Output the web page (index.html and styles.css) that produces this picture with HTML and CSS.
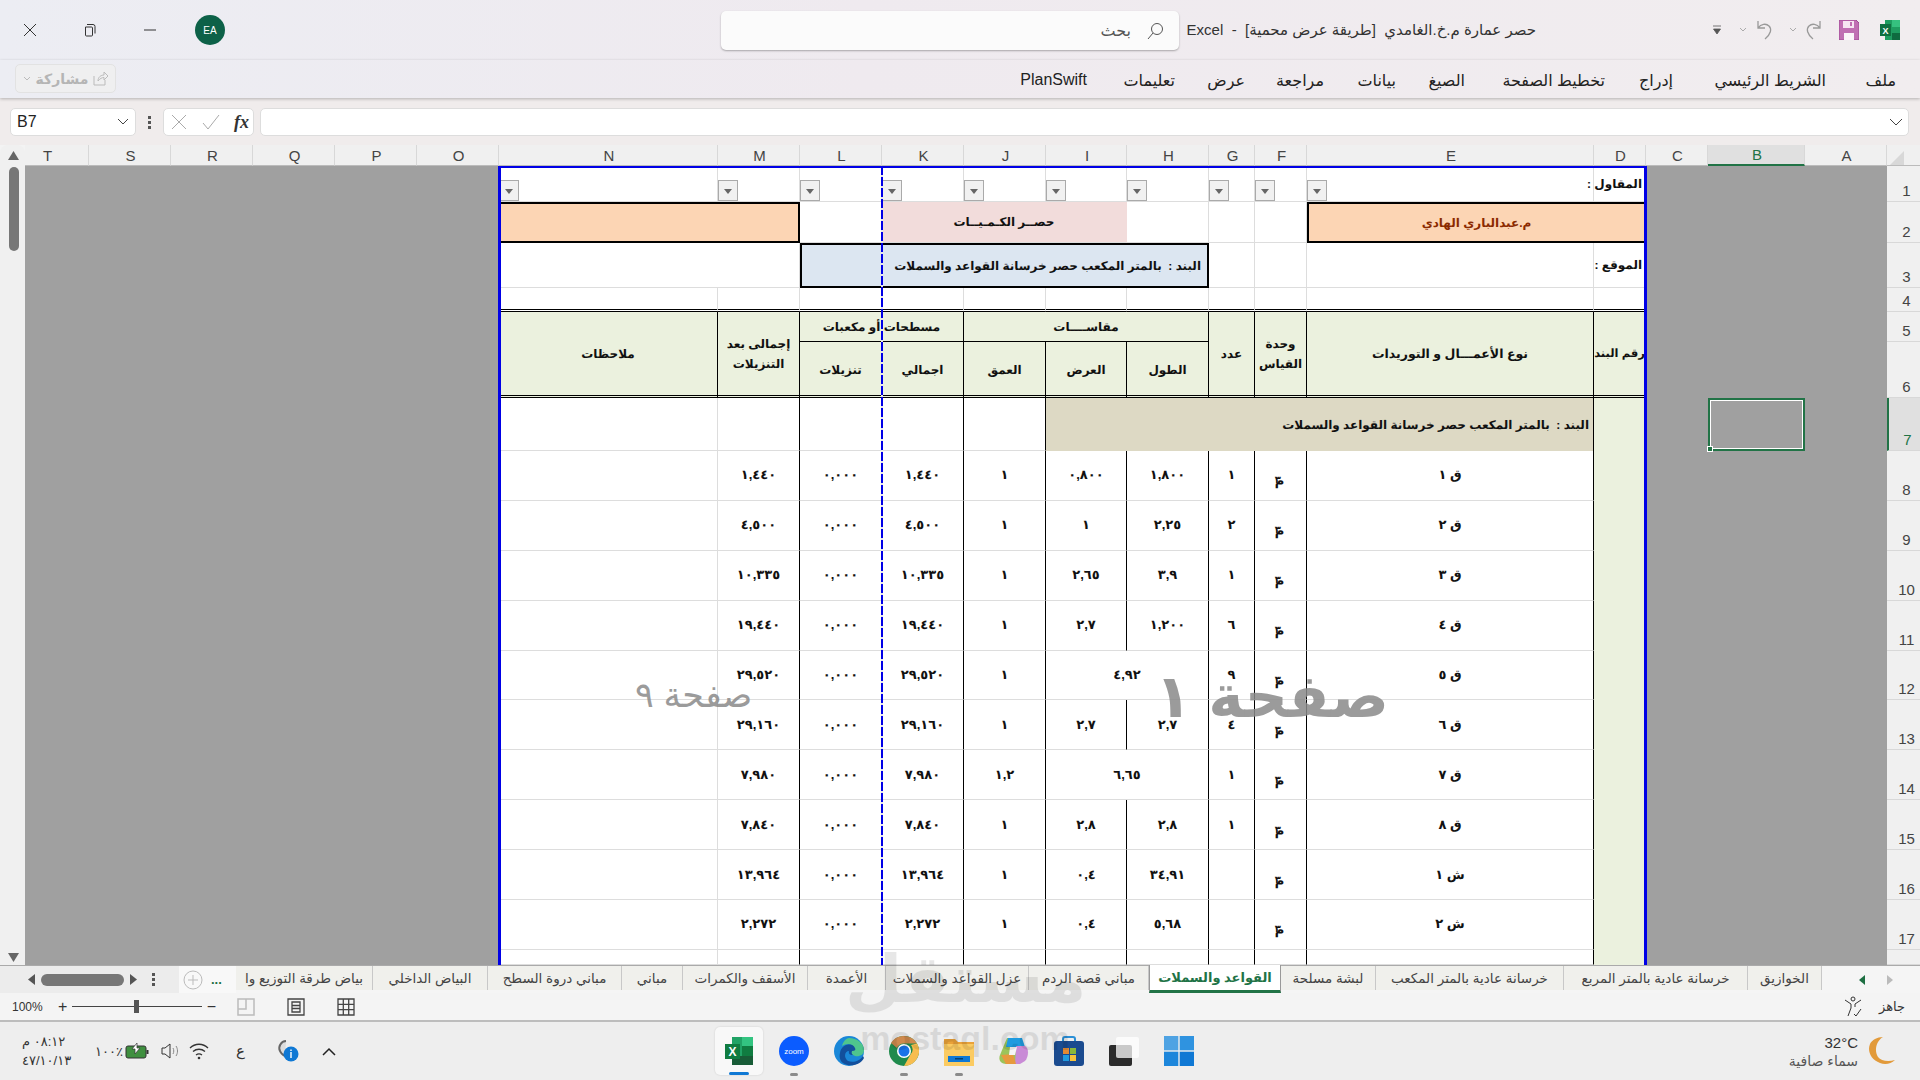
FILE: index.html
```html
<!DOCTYPE html>
<html lang="ar">
<head>
    <meta charset="UTF-8">
    <title>Excel</title>
    <link rel="stylesheet" href="styles.css">
</head>
<body>
<div class="app">
    <div class="titlebar">
        <div class="win-controls">
            <span class="win-btn"><svg width="14" height="14" viewBox="0 0 14 14"><path d="M1 1l12 12M13 1L1 13" stroke="#333" fill="none"/></svg></span>
            <span class="win-btn"><svg width="14" height="14" viewBox="0 0 14 14"><path d="M4 1.5h6a2 2 0 0 1 2 2v7M2.5 4h6a1 1 0 0 1 1 1v7a1 1 0 0 1-1 1h-5a1 1 0 0 1-1-1z" stroke="#333" fill="none"/></svg></span>
            <span class="win-btn"><svg width="14" height="14" viewBox="0 0 14 14"><path d="M1 7h12" stroke="#333" fill="none"/></svg></span>
            <span class="win-btn"><span class="avatar">EA</span></span>
        </div>
        <div class="search">
            <span>بحث</span>
            <svg width="20" height="20" viewBox="0 0 20 20"><circle cx="12" cy="8" r="5.5" stroke="#555" fill="none"/><path d="M8 12l-5 6" stroke="#555" fill="none"/></svg>
        </div>
        <div class="doc-title">حصر عمارة م.خ.الغامدي&nbsp; [طريقة عرض محمية]&nbsp; -&nbsp; Excel</div>
        <div class="qat">
            <svg class="q-more" width="10" height="12" viewBox="0 0 10 12"><path d="M1 2h8M1.500 5h7L5 10z" stroke="#555" fill="#555" stroke-width=".8"/></svg>
            <svg class="q-chev" width="8" height="6" viewBox="0 0 8 6"><path d="M1 1l3 3 3-3" stroke="#aaa" fill="none"/></svg>
            <svg class="q-undo" width="20" height="22" viewBox="0 0 20 22"><path d="M4 2v7h7M4 9c3-4 8-5 11-2 3 3 2 8-4 13" stroke="#999" fill="none" stroke-width="1.300"/></svg>
            <svg class="q-chev" width="8" height="6" viewBox="0 0 8 6"><path d="M1 1l3 3 3-3" stroke="#aaa" fill="none"/></svg>
            <svg class="q-redo" width="20" height="22" viewBox="0 0 20 22"><path d="M16 2v7H9M16 9c-3-4-8-5-11-2-3 3-2 8 4 13" stroke="#999" fill="none" stroke-width="1.300"/></svg>
            <svg class="q-save" width="20" height="20" viewBox="0 0 20 20"><path d="M0 0h17l3 3v17H0z" fill="#c06fb3" stroke="#a04a95"/><path d="M4 1h11v7H4z" fill="#f6e6f2"/><path d="M5 13h10v7H5z" fill="#fbf4f9"/><path d="M11 2h2v4h-2z" fill="#c06fb3"/></svg>
            <svg class="q-xl" width="20" height="20" viewBox="0 0 20 20"><path d="M5 0h15v20H5z" fill="#1f9d60"/><path d="M12 0h8v7h-8z" fill="#36c17f"/><path d="M12 13h8v7h-8z" fill="#0f6b3f"/><path d="M0 4h11v12H0z" fill="#107041"/><text x="5.500" y="14" class="xl-letter">X</text></svg>
        </div>
    </div>

    <div class="ribbon">
        <button class="share">
            <svg width="8" height="6" viewBox="0 0 8 6"><path d="M1 1l3 3 3-3" stroke="#bbb" fill="none"/></svg>
            <span>مشاركة</span>
            <svg width="15" height="15" viewBox="0 0 15 15"><path d="M1 5v9h11V9M5 10c0-4 3-6 6-6V1l4 4-4 4V6.500c-2 0-4 1-6 3.500z" stroke="#bbb" fill="none"/></svg>
        </button>
        <div class="ribbon-tabs">
            <span>PlanSwift</span>
            <span>تعليمات</span>
            <span>عرض</span>
            <span>مراجعة</span>
            <span>بيانات</span>
            <span>الصيغ</span>
            <span>تخطيط الصفحة</span>
            <span>إدراج</span>
            <span>الشريط الرئيسي</span>
            <span>ملف</span>
        </div>
    </div>

    <div class="formula-bar">
        <div class="namebox"><span>B7</span><svg width="12" height="8" viewBox="0 0 12 8"><path d="M1 1l5 5 5-5" stroke="#444" fill="none"/></svg></div>
        <div class="fb-dots"><i></i><i></i><i></i></div>
        <div class="fx-box">
            <svg width="18" height="18" viewBox="0 0 18 18"><path d="M2 2l14 14M16 2L2 16" stroke="#aaa" fill="none"/></svg>
            <svg width="20" height="18" viewBox="0 0 20 18"><path d="M2 10l5 6L18 2" stroke="#aaa" fill="none"/></svg>
            <span class="fx">fx</span>
        </div>
        <div class="formula-input"><svg width="14" height="8" viewBox="0 0 14 8"><path d="M1 1l6 6 6-6" stroke="#444" fill="none"/></svg></div>
    </div>

    <div class="workspace">
        <div class="vscroll">
            <svg width="11" height="9" viewBox="0 0 11 9"><path d="M5.500 0L11 9H0z" fill="#666"/></svg>
            <div class="vthumb"></div>
            <svg class="vdown" width="11" height="9" viewBox="0 0 11 9"><path d="M5.500 9L11 0H0z" fill="#666"/></svg>
        </div>
        <div class="sheet-col">
            <div class="col-head">
                <span class="first">T</span><span>S</span><span>R</span><span>Q</span><span>P</span><span>O</span><span>N</span><span>M</span><span>L</span><span>K</span><span>J</span><span>I</span><span>H</span><span>G</span><span>F</span><span>E</span><span>D</span><span>C</span><span class="on">B</span><span>A</span>
            </div>
            <div class="sheet-view">
                <div class="gray-left"></div>
                <div class="sheet">
                    <!-- row 1 -->
                    <div class="c"><i class="filter"></i></div>
                    <div class="c"><i class="filter"></i></div>
                    <div class="c"><i class="filter"></i></div>
                    <div class="c"><i class="filter"></i></div>
                    <div class="c"><i class="filter"></i></div>
                    <div class="c"><i class="filter"></i></div>
                    <div class="c"><i class="filter"></i></div>
                    <div class="c"><i class="filter"></i></div>
                    <div class="c"><i class="filter"></i></div>
                    <div class="c"><i class="filter"></i></div>
                    <div class="c label">المقاول :</div>
                    <!-- row 2 -->
                    <div class="c s2 peach"></div>
                    <div class="c"></div>
                    <div class="c s3 pink">حصــر الكـمـيــات</div>
                    <div class="c"></div>
                    <div class="c"></div>
                    <div class="c"></div>
                    <div class="c s2 peach name">م.عبدالباري الهادي</div>
                    <!-- row 3 -->
                    <div class="c s2"></div>
                    <div class="c s5 blue">البند :&nbsp; بالمتر المكعب حصر خرسانة القواعد والسملات</div>
                    <div class="c"></div>
                    <div class="c"></div>
                    <div class="c"></div>
                    <div class="c label">الموقع :</div>
                    <!-- row 4 -->
                    <div class="c r4"></div><div class="c r4"></div><div class="c r4"></div><div class="c r4"></div><div class="c r4"></div><div class="c r4"></div><div class="c r4"></div><div class="c r4"></div><div class="c r4"></div><div class="c r4"></div><div class="c r4"></div>
                    <!-- rows 5-6 -->
                    <div class="h rs2">ملاحظات</div>
                    <div class="h rs2">إجمالى بعد<br>التنزيلات</div>
                    <div class="h s2 sub">مسطحات أو مكعبات</div>
                    <div class="h s3 sub">مقاســــات</div>
                    <div class="h rs2">عدد</div>
                    <div class="h rs2">وحدة<br>القياس</div>
                    <div class="h rs2 wide">نوع الأعمـــال و التوريدات</div>
                    <div class="h rs2 tight">رقم البند</div>
                    <div class="h lo">تنزيلات</div>
                    <div class="h lo">اجمالي</div>
                    <div class="h lo">العمق</div>
                    <div class="h lo">العرض</div>
                    <div class="h lo">الطول</div>
                    <!-- row 7 -->
                    <div class="c"></div>
                    <div class="c bk"></div>
                    <div class="c bk"></div>
                    <div class="c bk"></div>
                    <div class="c bk"></div>
                    <div class="c s5 tan">البند :&nbsp; بالمتر المكعب حصر خرسانة القواعد والسملات</div>
                    <div class="dcol"></div>
                    <!-- rows 8-18 -->
                    <div class="c"></div><div class="c bk n">١,٤٤٠</div><div class="c bk n">٠,٠٠٠</div><div class="c bk n">١,٤٤٠</div><div class="c bk n">١</div><div class="c bk n">٠,٨٠٠</div><div class="c bk n">١,٨٠٠</div><div class="c bk n">١</div><div class="c bk n m3">م<sup>٣</sup></div><div class="c bk n">ق ١</div>
                    <div class="c"></div><div class="c bk n">٤,٥٠٠</div><div class="c bk n">٠,٠٠٠</div><div class="c bk n">٤,٥٠٠</div><div class="c bk n">١</div><div class="c bk n">١</div><div class="c bk n">٢,٢٥</div><div class="c bk n">٢</div><div class="c bk n m3">م<sup>٣</sup></div><div class="c bk n">ق ٢</div>
                    <div class="c"></div><div class="c bk n">١٠,٣٣٥</div><div class="c bk n">٠,٠٠٠</div><div class="c bk n">١٠,٣٣٥</div><div class="c bk n">١</div><div class="c bk n">٢,٦٥</div><div class="c bk n">٣,٩</div><div class="c bk n">١</div><div class="c bk n m3">م<sup>٣</sup></div><div class="c bk n">ق ٣</div>
                    <div class="c"></div><div class="c bk n">١٩,٤٤٠</div><div class="c bk n">٠,٠٠٠</div><div class="c bk n">١٩,٤٤٠</div><div class="c bk n">١</div><div class="c bk n">٢,٧</div><div class="c bk n">١,٢٠٠</div><div class="c bk n">٦</div><div class="c bk n m3">م<sup>٣</sup></div><div class="c bk n">ق ٤</div>
                    <div class="c"></div><div class="c bk n">٢٩,٥٢٠</div><div class="c bk n">٠,٠٠٠</div><div class="c bk n">٢٩,٥٢٠</div><div class="c bk n">١</div><div class="c bk n s2">٤,٩٢</div><div class="c bk n">٩</div><div class="c bk n m3">م<sup>٣</sup></div><div class="c bk n">ق ٥</div>
                    <div class="c"></div><div class="c bk n">٢٩,١٦٠</div><div class="c bk n">٠,٠٠٠</div><div class="c bk n">٢٩,١٦٠</div><div class="c bk n">١</div><div class="c bk n">٢,٧</div><div class="c bk n">٢,٧</div><div class="c bk n">٤</div><div class="c bk n m3">م<sup>٣</sup></div><div class="c bk n">ق ٦</div>
                    <div class="c"></div><div class="c bk n">٧,٩٨٠</div><div class="c bk n">٠,٠٠٠</div><div class="c bk n">٧,٩٨٠</div><div class="c bk n">١,٢</div><div class="c bk n s2">٦,٦٥</div><div class="c bk n">١</div><div class="c bk n m3">م<sup>٣</sup></div><div class="c bk n">ق ٧</div>
                    <div class="c"></div><div class="c bk n">٧,٨٤٠</div><div class="c bk n">٠,٠٠٠</div><div class="c bk n">٧,٨٤٠</div><div class="c bk n">١</div><div class="c bk n">٢,٨</div><div class="c bk n">٢,٨</div><div class="c bk n">١</div><div class="c bk n m3">م<sup>٣</sup></div><div class="c bk n">ق ٨</div>
                    <div class="c"></div><div class="c bk n">١٣,٩٦٤</div><div class="c bk n">٠,٠٠٠</div><div class="c bk n">١٣,٩٦٤</div><div class="c bk n">١</div><div class="c bk n">٠,٤</div><div class="c bk n">٣٤,٩١</div><div class="c bk n"></div><div class="c bk n m3">م<sup>٣</sup></div><div class="c bk n">ش ١</div>
                    <div class="c"></div><div class="c bk n">٢,٢٧٢</div><div class="c bk n">٠,٠٠٠</div><div class="c bk n">٢,٢٧٢</div><div class="c bk n">١</div><div class="c bk n">٠,٤</div><div class="c bk n">٥,٦٨</div><div class="c bk n"></div><div class="c bk n m3">م<sup>٣</sup></div><div class="c bk n">ش ٢</div>
                    <div class="c"></div><div class="c bk"></div><div class="c bk"></div><div class="c bk"></div><div class="c bk"></div><div class="c bk"></div><div class="c bk"></div><div class="c bk"></div><div class="c bk"></div><div class="c bk"></div>

                    <div class="page-frame"></div>
                    <div class="page-break"></div>
                    <div class="wm wm-1">صفحة ١</div>
                    <div class="wm wm-9">صفحة ٩</div>
                </div>
                <div class="gray-right">
                    <div class="sel-cell"><i></i></div>
                </div>
            </div>
        </div>
        <div class="row-head">
            <div class="corner"><svg width="14" height="14" viewBox="0 0 14 14"><path d="M14 0v14H0z" fill="#d8d8d8"/></svg></div>
            <div class="row-nums">
                <span>1</span><span>2</span><span>3</span><span>4</span><span>5</span><span>6</span><span class="on">7</span><span>8</span><span>9</span><span>10</span><span>11</span><span>12</span><span>13</span><span>14</span><span>15</span><span>16</span><span>17</span><span></span>
            </div>
        </div>
    </div>

    <div class="tabbar">
        <div class="hscroll">
            <svg width="7" height="11" viewBox="0 0 7 11"><path d="M0 5.500L7 0v11z" fill="#555"/></svg>
            <div class="hthumb"></div>
            <svg width="7" height="11" viewBox="0 0 7 11"><path d="M7 5.500L0 0v11z" fill="#555"/></svg>
            <div class="fb-dots"><i></i><i></i><i></i></div>
        </div>
        <div class="add-sheet">
            <svg width="20" height="20" viewBox="0 0 20 20"><circle cx="10" cy="10" r="9" stroke="#bbb" fill="none"/><path d="M10 5v10M5 10h10" stroke="#bbb" fill="none"/></svg>
            <span class="more">...</span>
        </div>
        <div class="tabs">
            <span>بياض طرقة التوزيع وا</span>
            <span>البياض الداخلي</span>
            <span>مباني دروة السطح</span>
            <span>مباني</span>
            <span>الأسقف والكمرات</span>
            <span>الأعمدة</span>
            <span>عزل القواعد والسملات</span>
            <span>مباني قصة الردم</span>
            <span class="active">القواعد والسملات</span>
            <span>لبشة مسلحة</span>
            <span>خرسانة عادية بالمتر المكعب</span>
            <span>خرسانة عادية بالمتر المربع</span>
            <span>الخوازيق</span>
        </div>
        <div class="tab-nav">
            <svg width="6" height="10" viewBox="0 0 6 10"><path d="M0 5l6-5v10z" fill="#1d6f42"/></svg>
            <svg width="6" height="10" viewBox="0 0 6 10"><path d="M6 5L0 0v10z" fill="#bbb"/></svg>
        </div>
    </div>

    <div class="statusbar">
        <span class="zoom-pct">100%</span>
        <div class="zoom-slider"><span>+</span><div class="track"><i></i></div><span>−</span></div>
        <div class="views">
            <svg width="18" height="18" viewBox="0 0 18 18"><path d="M1 1h16v16H1zM9 1v10H1" stroke="#bbb" stroke-width="1.500" fill="none"/></svg>
            <svg width="18" height="18" viewBox="0 0 18 18"><path d="M1 1h16v16H1zM5 4h8v10H5zM5 7.500h8M5 10.500h8" stroke="#444" stroke-width="1.300" fill="none"/></svg>
            <svg width="18" height="18" viewBox="0 0 18 18"><path d="M1 1h16v16H1zM1 6.300h16M1 11.700h16M6.300 1v16M11.700 1v16" stroke="#444" stroke-width="1.300" fill="none"/></svg>
        </div>
        <div class="status-right">
            <svg width="20" height="22" viewBox="0 0 20 22"><circle cx="10" cy="3" r="2" stroke="#333" fill="none"/><path d="M2 4l6 4v4l-3 8M18 4l-6 4v3M11 18l2 2 5-7" stroke="#333" fill="none"/></svg>
            <span>جاهز</span>
        </div>
    </div>

    <div class="taskbar">
        <div class="tray">
            <div class="clock"><span>٠٨:١٢ م</span><span>٤٧/١٠/١٣</span></div>
            <span class="batt-pct">١٠٠٪</span>
            <svg width="24" height="16" viewBox="0 0 24 16"><rect x="1" y="3" width="20" height="12" rx="2" fill="#3f8f3f" stroke="#333"/><path d="M21.500 7h2v4h-2z" fill="#333"/><path d="M12 0v5h3l-5 6V6H7z" fill="#fff" stroke="#333" stroke-width=".7"/></svg>
            <svg class="t-sound" width="20" height="18" viewBox="0 0 20 18"><path d="M1 6h3l5-4v14l-5-4H1z" stroke="#333" fill="none"/><path d="M12 6c1 2 1 4 0 6M15 4c2 3 2 7 0 10" stroke="#888" fill="none"/></svg>
            <svg class="t-wifi" width="20" height="18" viewBox="0 0 20 18"><path d="M1 6c5-5 13-5 18 0M4 9.500c3.500-3 8.500-3 12 0M7 13c2-1.500 4-1.500 6 0" stroke="#333" stroke-width="1.300" fill="none"/><circle cx="10" cy="16" r="1.300" fill="#333"/></svg>
            <span class="t-lang">ع</span>
            <svg class="t-cloud" width="22" height="24" viewBox="0 0 22 24"><path d="M9 2a7 7 0 0 0-6 10c1 3 3 4 5 5" stroke="#666" stroke-width="2" fill="#ddd"/><circle cx="14" cy="15" r="7.500" fill="#0f78d4"/><path d="M13.300 13h1.400v6h-1.400zM13.300 10.500h1.400v1.400h-1.400z" fill="#fff"/></svg>
            <svg class="t-up" width="14" height="9" viewBox="0 0 14 9"><path d="M1 8l6-6 6 6" stroke="#222" stroke-width="1.500" fill="none"/></svg>
        </div>
        <div class="apps">
            <div class="app-icon current">
                <svg width="30" height="30" viewBox="0 0 30 30"><path d="M8 1h21v28H8z" fill="#21a366"/><path d="M18 1h11v9H18z" fill="#33c481"/><path d="M18 20h11v9H18zM8 20h10v9H8z" fill="#185c37"/><path d="M18 10h11v10H18z" fill="#107c41"/><path d="M1 8h15v15H1z" fill="#107c41"/><text x="8.500" y="20" class="xl-big">X</text></svg>
            </div>
            <div class="app-icon run">
                <svg width="30" height="30" viewBox="0 0 30 30"><circle cx="15" cy="15" r="15" fill="#0b5cff"/><text x="15" y="18" class="zoom-word">zoom</text></svg>
            </div>
            <div class="app-icon">
                <svg width="30" height="30" viewBox="0 0 30 30"><circle cx="15" cy="15" r="15" fill="#1a87d8"/><path d="M6 17c1-9 12-11 17-6 3 3 2 8-2 8-3 0-7 0-6-4-4 0-6 6-1 10 5 2 12 0 15-5l1 2c-4 8-15 9-21 5-3-2-4-6-3-10z" fill="#124f9c"/><path d="M15 2c8 0 15 5 15 12 0 5-5 7-9 6-3-1-4-3-3-5 3 0 4-1 3-3C19 7 12 7 8 10c1-4 4-8 7-8z" fill="#4fc58d"/></svg>
            </div>
            <div class="app-icon run">
                <svg width="30" height="30" viewBox="0 0 30 30"><circle cx="15" cy="15" r="15" fill="#1f8a4c"/><path d="M15 0a15 15 0 0 1 13 7.500H15a7.500 7.500 0 0 0-7 4.500L2 7A15 15 0 0 1 15 0z" fill="#cf8a4e"/><path d="M28 7.500A15 15 0 0 1 15 30l6.500-11.500A7.500 7.500 0 0 0 22 9z" fill="#f7bd4f"/><circle cx="15" cy="15" r="7" fill="#fff"/><circle cx="15" cy="15" r="5.500" fill="#1a73e8"/></svg>
            </div>
            <div class="app-icon run">
                <svg width="30" height="30" viewBox="0 0 30 30"><path d="M0 3h11l3 3h16v24H0z" fill="#e9a23a"/><path d="M0 8h30v22H0z" fill="#fbcb62"/><path d="M4 20h22v6H4z" fill="#0f78d4"/><path d="M11 22h8v1.500h-8z" fill="#06406f"/></svg>
            </div>
            <div class="app-icon">
                <svg width="30" height="30" viewBox="0 0 30 30"><path d="M8 2h13l4 10-8 16H7c-5 0-8-4-6-9z" fill="#9bc45a"/><path d="M9 2h14l3 9H7z" fill="#1f9be0"/><path d="M17 10h9c4 2 4 10 0 15l-5 3h-5z" fill="#c98bd6"/><path d="M2 19l12-1 3 10H7z" fill="#e69a3e"/><path d="M11 11h7l-2 8h-6z" fill="#f5f5f5"/></svg>
            </div>
            <div class="app-icon">
                <svg width="30" height="30" viewBox="0 0 30 30"><path d="M9 7V3a2 2 0 0 1 2-2h8a2 2 0 0 1 2 2v4" stroke="#2a8fd6" stroke-width="2" fill="none"/><rect y="5" width="30" height="25" rx="3" fill="#1b4b8f"/><path d="M9 12h6v6H9z" fill="#e28a33"/><path d="M16 12h6v6h-6z" fill="#8ab83a"/><path d="M9 19h6v6H9z" fill="#1f9be0"/><path d="M16 19h6v6h-6z" fill="#f5c33b"/></svg>
            </div>
            <div class="app-icon">
                <svg width="30" height="30" viewBox="0 0 30 30"><rect y="9" width="23" height="21" rx="2" fill="#2b2b2b"/><rect x="7" y="1" width="23" height="21" rx="2" fill="#fff" fill-opacity=".75"/></svg>
            </div>
            <div class="app-icon">
                <svg width="30" height="30" viewBox="0 0 30 30"><path d="M0 0h14.300v14.300H0z" fill="#4fa3e3"/><path d="M15.700 0H30v14.300H15.700z" fill="#2f93e0"/><path d="M0 15.700h14.300V30H0z" fill="#1c86db"/><path d="M15.700 15.700H30V30H15.700z" fill="#0f78d4"/></svg>
            </div>
        </div>
        <div class="weather">
            <div class="weather-text"><span>32°C</span><span class="sky">سماء صافية</span></div>
            <svg width="28" height="28" viewBox="0 0 28 28"><path d="M15 0C8 4 6 14 10 20c3 4 10 5 17 3-4 4-10 5-15 3C3 23-1 14 2 7 4 3 9 0 15 0z" fill="#e29a3a"/></svg>
        </div>
    </div>

    <div class="site-mark">
        <div class="mark-ar">مستقل</div>
        <div class="mark-en">mostaql.com</div>
    </div>
</div>
</body>
</html>
```

FILE: styles.css
```css
* { margin: 0; padding: 0; box-sizing: border-box; }
html, body { width: 1920px; height: 1080px; overflow: hidden; }
body { font-family: "Liberation Sans", "DejaVu Sans", sans-serif; color: #222; background: #f3f3f3; }
.app { position: relative; width: 1920px; height: 1080px; display: flex; flex-direction: column; overflow: hidden; }
button { font: inherit; }

/* title bar and ribbon */
.titlebar { height: 60px; display: flex; align-items: center; background: linear-gradient(90deg, #ecedf3 0%, #efeaef 45%, #f1edef 100%); }
.win-controls { width: 721px; display: flex; }
.win-btn { width: 60px; display: flex; justify-content: center; align-items: center; }
.avatar { width: 30px; height: 30px; border-radius: 50%; background: #0d6148; color: #fff; font-size: 10px; display: flex; align-items: center; justify-content: center; }
.search { width: 458px; height: 39px; margin-top: 1px; background: #fbfbfb; border-radius: 5px; box-shadow: 0 1px 2px rgba(0,0,0,0.3); display: flex; align-items: center; justify-content: flex-end; gap: 14px; padding-right: 14px; font-size: 16px; color: #555; }
.doc-title { width: 357px; text-align: right; font-size: 15px; color: #333; white-space: nowrap; direction: rtl; }
.qat { flex: 1; display: flex; align-items: center; justify-content: flex-end; padding-right: 20px; }
.q-chev { margin-right: 7px; }
.q-undo { margin-right: 15px; }
.q-redo { margin-right: 15px; }
.q-save { margin-right: 21px; }
.q-more { margin-right: 17px; }
.xl-letter { font: bold 9px "Liberation Sans", sans-serif; fill: #fff; text-anchor: middle; }

.ribbon { height: 38px; display: flex; justify-content: space-between; align-items: flex-start; background: linear-gradient(90deg, #ecedf3 0%, #efeaef 45%, #f1edef 100%); box-shadow: 0 1px 3px rgba(0,0,0,0.25); position: relative; padding-left: 15px; }
.share { width: 101px; height: 29px; margin-top: 4px; display: flex; align-items: center; justify-content: center; gap: 5px; border: 1px solid #e2e2e2; border-radius: 5px; background: #efeff0; color: #b5b5b5; font-size: 14px; font-weight: bold; }
.ribbon-tabs { display: grid; grid-template-columns: 67px 88px 70px 79px 72px 69px 140px 68px 153px 70px; justify-items: end; margin-right: 24px; margin-top: 11px; font-size: 16px; color: #222; white-space: nowrap; }

/* formula bar */
.formula-bar { height: 47px; padding: 10px 11px 9px 10px; display: flex; align-items: stretch; background: #f0ecec; }
.namebox { width: 126px; background: #fff; border: 1px solid #ddd; border-radius: 5px; display: flex; align-items: center; justify-content: space-between; padding: 0 6px 0 6px; font-size: 16px; }
.fb-dots { width: 27px; display: flex; flex-direction: column; align-items: center; justify-content: center; gap: 2px; }
.fb-dots i { width: 3px; height: 3px; background: #555; display: block; }
.fx-box { width: 91px; margin-right: 6px; background: #fff; border: 1px solid #ddd; border-radius: 5px; display: flex; align-items: center; justify-content: space-between; padding: 0 4px 0 6px; }
.fx { font: italic bold 18px "Liberation Serif", serif; color: #333; }
.formula-input { flex: 1; background: #fff; border: 1px solid #ddd; border-radius: 5px; display: flex; align-items: center; justify-content: flex-end; padding-right: 5px; }

/* sheet */
.workspace { height: 820px; display: flex; }
.vscroll { width: 25px; background: #f0f0f0; border-radius: 8px 8px 0 0; display: flex; flex-direction: column; align-items: center; padding: 6px 6px 3px 8px; }
.vthumb { width: 10px; height: 84px; margin-top: 7px; background: #777; border-radius: 5px; }
.vdown { margin-top: auto; }
.sheet-col { width: 1862px; display: flex; flex-direction: column; }
.col-head { height: 21px; display: grid; grid-template-columns: 64px repeat(5, 82px) 219px 82px 82px 82px 82px 81px 82px 46px 52px 287px 52px 62px 97px 82px; background: #f0f0f0; }
.col-head span { display: flex; align-items: center; justify-content: center; border-right: 1px solid #d8d8d8; border-bottom: 1px solid #bbb; padding-left: 2px; font-size: 15px; color: #444; }
.col-head .first { padding: 0 18px 0 0; }
.col-head .on { background: #e0e0e0; color: #217346; border-bottom: 2px solid #217346; }
.sheet-view { height: 799px; display: flex; overflow: hidden; }
.gray-left { width: 474px; background: #a0a0a0; }
.gray-right { width: 241px; background: #a0a0a0; display: grid; grid-template-columns: 62px 97px 82px; grid-template-rows: 36px 41px 45px 24px 30px 56px 53px 1fr; }
.sel-cell { grid-column: 2; grid-row: 7; position: relative; border: 2px solid #217346; outline: 1px solid #fff; outline-offset: -3px; }
.sel-cell i { position: absolute; left: -3px; bottom: -3px; width: 6px; height: 6px; background: #217346; border: 1px solid #fff; }

.sheet { position: relative; width: 1147px; display: grid; grid-template-columns: 219px 82px 82px 82px 82px 81px 82px 46px 52px 287px 52px; grid-template-rows: 36px 41px 45px 24px 30px 56px 53px repeat(10, 49.9px) 15px; background: #fff; direction: ltr; font-weight: bold; font-size: 12px; color: #111; text-rendering: geometricPrecision; }
.c { border-right: 1px solid #ddd; border-bottom: 1px solid #ddd; display: flex; align-items: center; justify-content: center; direction: rtl; white-space: nowrap; min-width: 0; }
.s2 { grid-column: span 2; }
.s3 { grid-column: span 3; }
.s5 { grid-column: span 5; }
.rs2 { grid-row: span 2; }
.c .filter { width: 20px; height: 21px; display: block; align-self: flex-end; margin-right: auto; margin-left: 0; background: #f1f1f1; border: 1px solid #aaa; position: relative; }
.c .filter::after { content: ""; position: absolute; left: 5px; top: 8px; border: 4px solid transparent; border-top: 5px solid #666; border-bottom: 0; }
.label { justify-content: flex-start; padding-right: 3px; font-size: 12px; overflow: visible; }
.peach { background: #fcd5b4; border: 2px solid #000; }
.name { color: #8b2a00; }
.pink { background: #f2dcdb; border-right-color: #f2dcdb; }
.blue { background: #dce6f1; border: 2px solid #000; justify-content: flex-start; padding-right: 6px; }
.r4 { border-bottom: 3px double #000; }
.h { background: #ebf1de; border-right: 1px solid #000; border-bottom: 3px double #000; display: flex; align-items: center; justify-content: center; text-align: center; direction: rtl; line-height: 20px; white-space: nowrap; }
.h.sub { border-bottom: 1px solid #000; }
.h.lo { padding-top: 2px; }
.wide { font-size: 12.5px; }
.tight { font-size: 11.5px; }
.bk { border-right-color: #000; }
.tan { background: #ddd9c4; justify-content: flex-start; padding-right: 4px; border-right: 1px solid #000; border-bottom: 0; }
.dcol { grid-row: span 12; background: #ebf1de; }
.n { font-size: 13px; letter-spacing: 2.5px; }
.m3 { letter-spacing: 0; padding: 12px 2px 0 0; }
.n sup { font-size: 10px; line-height: 0; vertical-align: 18px; margin-right: -6px; }
.page-frame { position: absolute; inset: 0 -1px 0 -1px; border: solid #0000e6; border-width: 2px 3px 0 3px; pointer-events: none; }
.page-break { position: absolute; left: 382px; top: 0; bottom: 0; width: 2px; background: repeating-linear-gradient(180deg, #0000e6 0 9px, #e8e8e8 9px 11px); }
.wm { position: absolute; direction: rtl; color: #8a8a8a; opacity: 0.85; font-weight: bold; white-space: nowrap; }
.wm-1 { left: 656px; top: 496px; font-size: 60px; }
.wm-9 { left: 136px; top: 510px; font-size: 35px; font-weight: normal; }

.row-head { width: 33px; display: flex; flex-direction: column; background: #f0f0f0; }
.corner { height: 21px; display: flex; justify-content: flex-start; padding: 6px 0 0 3px; border-bottom: 1px solid #bbb; }
.row-nums { flex: 1; display: grid; grid-template-rows: 36px 41px 45px 24px 30px 56px 53px repeat(10, 49.9px) 15px; }
.row-nums span { display: flex; align-items: flex-end; justify-content: center; padding: 0 0 2px 6px; font-size: 15px; color: #444; border-bottom: 1px solid #d8d8d8; }
.row-nums .on { background: #e0e0e0; color: #217346; border-left: 2px solid #217346; }

/* sheet tabs */
.tabbar { height: 28px; display: flex; background: #f5f5f5; border-top: 1px solid #aaa; }
.hscroll { width: 179px; background: #ececec; display: flex; align-items: center; gap: 6px; padding-left: 28px; }
.hthumb { width: 83px; height: 12px; background: #777; border-radius: 6px; }
.hscroll .fb-dots { width: 16px; margin-left: 2px; }
.add-sheet { width: 57px; background: #f8f8f8; display: flex; align-items: center; gap: 8px; padding-left: 4px; }
.more { font-size: 13px; font-weight: bold; color: #1d6f42; }
.tabs { display: grid; grid-template-columns: 137px 115px 134px 61px 125px 78px 143px 120px 132px 95px 188px 184px 74px; }
.tabs span { display: flex; align-items: center; justify-content: center; background: #f0f0ec; border-right: 1px solid #c8c8c8; margin-bottom: 3px; font-size: 13.5px; color: #444; white-space: nowrap; overflow: hidden; direction: rtl; }
.tabs .active { background: #fff; color: #217346; font-weight: bold; font-size: 13px; margin-bottom: 0; border-bottom: 3px solid #217346; border-right: 1px solid #999; border-left: 1px solid #999; margin-top: -1px; }
.tab-nav { flex: 1; display: flex; align-items: center; justify-content: space-between; padding: 0 27px 0 37px; }

/* status bar and taskbar */
.statusbar { height: 27px; display: flex; align-items: center; background: #f4f4f4; padding-left: 12px; position: relative; }
.zoom-pct { width: 46px; font-size: 12px; color: #333; }
.zoom-slider { display: flex; align-items: center; width: 158px; gap: 5px; font-size: 16px; color: #333; }
.track { flex: 1; height: 1px; background: #444; position: relative; }
.track i { position: absolute; left: 62px; top: -6px; width: 5px; height: 13px; background: #555; }
.views { display: flex; gap: 32px; margin-left: 21px; }
.status-right { margin-left: auto; padding-right: 15px; display: flex; align-items: center; gap: 16px; font-size: 13px; color: #333; }

.taskbar { height: 60px; display: flex; align-items: center; background: #eeeeee; border-top: 2px solid #bdbdbd; position: relative; }
.tray { width: 715px; display: flex; align-items: center; padding-left: 22px; color: #333; font-size: 13px; }
.clock { width: 50px; display: flex; flex-direction: column; gap: 4px; align-items: flex-start; }
.batt-pct { margin-left: 23px; width: 30px; }
.t-sound { margin-left: 12px; }
.t-wifi { margin-left: 8px; }
.t-lang { margin-left: 27px; font-size: 15px; }
.t-cloud { margin-left: 32px; }
.t-up { margin-left: 23px; }
.apps { display: flex; gap: 7px; height: 48px; align-items: center; }
.app-icon { width: 48px; height: 48px; display: flex; align-items: center; justify-content: center; position: relative; }
.app-icon.current { background: #f8f8f8; border-radius: 5px; box-shadow: 0 0 2px rgba(0,0,0,0.15); }
.app-icon.current::after { content: ""; position: absolute; bottom: 0; left: 14px; width: 20px; height: 3px; border-radius: 2px; background: #0f78d4; }
.app-icon.run::after { content: ""; position: absolute; bottom: -1px; left: 20px; width: 8px; height: 3px; border-radius: 2px; background: #8a8a8a; }
.xl-big { font: bold 12px "Liberation Sans", sans-serif; fill: #fff; text-anchor: middle; }
.zoom-word { font: 8px "Liberation Sans", sans-serif; fill: #fff; text-anchor: middle; }
.weather { margin-left: auto; padding-right: 24px; display: flex; align-items: center; gap: 10px; }
.weather-text { display: flex; flex-direction: column; align-items: flex-end; gap: 2px; font-size: 15px; color: #333; }
.sky { font-size: 14px; color: #555; }

/* site watermark over everything */
.site-mark { position: absolute; left: 845px; top: 940px; width: 240px; text-align: center; color: #000; opacity: 0.09; pointer-events: none; }
.mark-ar { font-size: 66px; font-weight: bold; line-height: 78px; }
.mark-en { font-size: 34px; font-weight: bold; line-height: 40px; }
```
